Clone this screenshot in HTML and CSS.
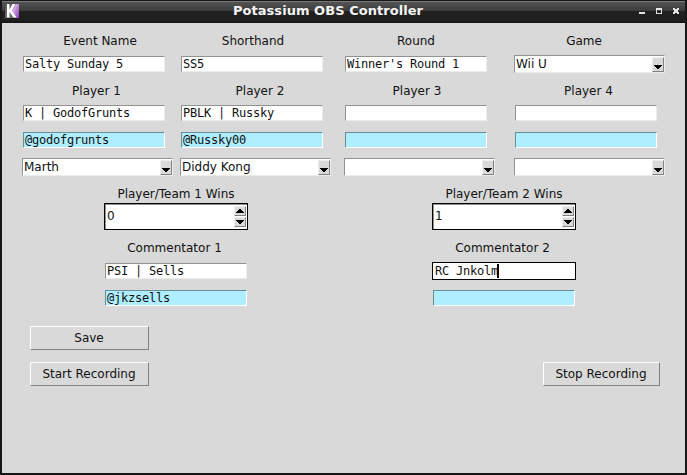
FILE: index.html
```html
<!DOCTYPE html>
<html lang="en">
<head>
<meta charset="utf-8">
<title>Potassium OBS Controller</title>
<link rel="stylesheet" href="styles.css">
</head>
<body>
<div class="window">
  <header class="titlebar">
    <svg class="logo" width="14" height="14" viewBox="0 0 14 14">
      <defs>
        <linearGradient id="lg" x1="0" y1="0" x2="1" y2="1"><stop offset="0" stop-color="#555"/><stop offset="1" stop-color="#777"/></linearGradient>
        <linearGradient id="pu" x1="0" y1="0" x2="1" y2="1"><stop offset="0" stop-color="#f3e4fa"/><stop offset=".5" stop-color="#c08bdc"/><stop offset="1" stop-color="#8c3fb8"/></linearGradient>
      </defs>
      <rect width="14" height="14" fill="url(#lg)"/>
      <path d="M14 0v14h-3L7 7l4-7z" fill="url(#pu)"/>
      <path d="M2 0h2.500v5.500L7.500 0h3L7 6.500l4.500 7H8.500L4.500 8v5.500H2z" fill="#fff"/>
    </svg>
    <h1 class="title">Potassium OBS Controller</h1>
    <svg class="controls" width="42" height="8" viewBox="0 0 42 8" fill="#e4e4e0" shape-rendering="crispEdges">
      <path d="M0 5h6v2H0z"/>
      <path fill-rule="evenodd" d="M17 1h6v6h-6zM18 3v3h4V3z"/>
      <path d="M34 1h2v1h2V1h2v2h-1v2h1v2h-2V6h-2v1h-2V5h1V3h-1z"/>
    </svg>
  </header>
  <main class="content">
    <section class="grid">
      <div class="label l1">Event Name</div><div class="label l2">Shorthand</div><div class="label l3">Round</div><div class="label l4">Game</div>
      <div class="entry">Salty Sunday 5</div><div class="entry">SS5</div><div class="entry">Winner's Round 1</div>
      <div class="combo"><span>Wii U</span><i class="drop"><svg width="8" height="4"><path d="M0 0h8v1H7v1H6v1H5v1H3V3H2V2H1V1H0z"/></svg></i></div>
      <div class="label p1">Player 1</div><div class="label p2">Player 2</div><div class="label p3">Player 3</div><div class="label p4">Player 4</div>
      <div class="entry">K | GodofGrunts</div><div class="entry">PBLK | Russky</div><div class="entry"></div><div class="entry"></div>
      <div class="entry handle">@godofgrunts</div><div class="entry handle">@Russky00</div><div class="entry handle"></div><div class="entry handle"></div>
      <div class="combo"><span>Marth</span><i class="drop"><svg width="8" height="4"><path d="M0 0h8v1H7v1H6v1H5v1H3V3H2V2H1V1H0z"/></svg></i></div>
      <div class="combo"><span>Diddy Kong</span><i class="drop"><svg width="8" height="4"><path d="M0 0h8v1H7v1H6v1H5v1H3V3H2V2H1V1H0z"/></svg></i></div>
      <div class="combo"><span></span><i class="drop"><svg width="8" height="4"><path d="M0 0h8v1H7v1H6v1H5v1H3V3H2V2H1V1H0z"/></svg></i></div>
      <div class="combo"><span></span><i class="drop"><svg width="8" height="4"><path d="M0 0h8v1H7v1H6v1H5v1H3V3H2V2H1V1H0z"/></svg></i></div>
    </section>
    <section class="teams">
      <div class="label">Player/Team 1 Wins</div><div class="label">Player/Team 2 Wins</div>
      <div class="spin"><span>0</span><div class="steps"><i><svg width="8" height="4"><path d="M3 0h2v1h1v1h1v1h1v1H0V3h1V2h1V1h1z"/></svg></i><i><svg width="8" height="4"><path d="M0 0h8v1H7v1H6v1H5v1H3V3H2V2H1V1H0z"/></svg></i></div></div>
      <div class="spin"><span>1</span><div class="steps"><i><svg width="8" height="4"><path d="M3 0h2v1h1v1h1v1h1v1H0V3h1V2h1V1h1z"/></svg></i><i><svg width="8" height="4"><path d="M0 0h8v1H7v1H6v1H5v1H3V3H2V2H1V1H0z"/></svg></i></div></div>
      <div class="label commentator">Commentator 1</div><div class="label commentator">Commentator 2</div>
      <div class="entry">PSI | Sells</div><div class="entry focused">RC Jnkolm<b class="caret"></b></div>
      <div class="entry handle">@jkzsells</div><div class="entry handle"></div>
    </section>
    <section class="actions">
      <div class="button">Save</div>
      <div class="row"><div class="button">Start Recording</div><div class="button stop">Stop Recording</div></div>
    </section>
  </main>
</div>
</body>
</html>
```

FILE: styles.css
```css
* { box-sizing: border-box; }
body { margin: 0; overflow: hidden; font: 12px/16px "DejaVu Sans", sans-serif; color: #111; }
.window { width: 687px; height: 475px; display: flex; flex-direction: column; border: 2px solid #171717; border-top-width: 1px; background: #d9d9d9; }
.titlebar { height: 22px; flex: none; display: flex; align-items: center; padding: 0 4px 2px 3px; border-top: 1px solid #777; background: linear-gradient(#545454 0, #3b3b3b 9px, #202020 9px, #202020 18px, #131313 21px); }
.logo { flex: none; margin-top: -1px; }
.title { flex: 1; margin: 0; padding-right: 2px; text-align: center; font-size: 13px; line-height: 16px; letter-spacing: .05px; font-weight: bold; color: #f4f4f4; transform: translateY(-1px); }
.controls { flex: none; margin-top: -1px; }
.content { padding: 5px 0 0 20px; }
.grid { display: grid; grid-template-columns: 158px 164px 170px 151px; grid-template-rows: 23px 26px 26px 20px 34px 20px; align-items: center; }
.label { text-align: center; white-space: nowrap; padding-top: 2px; line-height: 16px; }
.l1 { width: 156px; }
.l2 { width: 146px; }
.l3 { width: 144px; }
.l4 { width: 140px; }
.p1 { width: 149px; }
.p2 { width: 160px; }
.p3 { width: 146px; }
.p4 { width: 149px; }
.entry { width: 142px; height: 16px; margin-left: 1px; padding-left: 1px; border: 1px solid #fff; border-color: #929292 #ececec #ececec #929292; background: #fff; font: 12px/14px "DejaVu Sans Mono", monospace; letter-spacing: -.225px; white-space: pre; }
.handle { background: #aeeeff; border-color: #688f99 #fff #fff #688f99; }
.combo { display: flex; justify-content: space-between; width: 151px; height: 18px; padding: 0 0 0 1px; border: 1px solid #929292; border-right-color: #ececec; border-bottom-color: #ececec; background: #fff; line-height: 17px; }
.drop { width: 12px; height: 15px; margin-top: 1px; display: flex; align-items: flex-end; justify-content: center; padding-bottom: 2px; border: 1px solid #eee; border-right-color: #828282; border-bottom-color: #828282; background: #d9d9d9; }
.teams { display: grid; grid-template-columns: 328px 144px; grid-template-rows: 20px 27px 34px 14px 40px; align-items: center; margin: 6px 0 0 82px; }
.teams .label { width: 144px; }
.teams .commentator { width: 141px; }
.spin { display: flex; justify-content: space-between; width: 144px; height: 27px; padding: 1px; border: 1px solid #000; background: #fff; line-height: 22px; box-shadow: inset 1px 1px #929292; }
.spin span { padding-left: 1px; }
.steps { display: flex; flex-direction: column; gap: 1px; padding-top: 1px; }
.steps i { width: 12px; height: 10px; display: flex; align-items: center; justify-content: center; background: #d9d9d9; border: 1px solid #eee; border-right-color: #828282; border-bottom-color: #828282; }
.steps svg, .drop svg { display: block; flex: none; }
.focused { display: flex; width: 144px; height: 18px; margin-left: 0; border-color: #000; line-height: 16px; padding-left: 2px; }
.caret { width: 2px; height: 14px; margin: 1px 0 0 -1px; background: #000; }
.actions { margin: 8px 25px 0 8px; }
.row { display: flex; justify-content: space-between; margin-top: 12px; }
.button { width: 119px; height: 24px; border: 1px solid #fff; border-right-color: #828282; border-bottom-color: #828282; text-align: center; line-height: 22px; padding-right: 1px; }
.stop { width: 117px; }
```
